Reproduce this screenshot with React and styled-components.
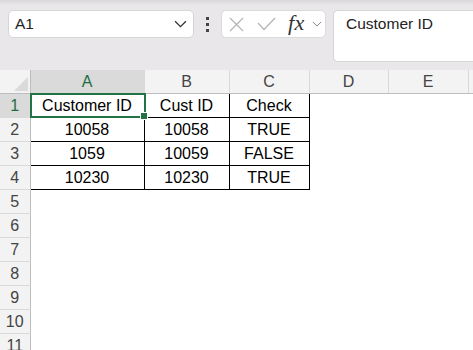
import React from "react";
import styled, { createGlobalStyle } from "styled-components";

const Global = createGlobalStyle`
  html, body { margin: 0; padding: 0; background: #fff; }
  body { font-family: "Liberation Sans", Arial, sans-serif; }
`;

const Page = styled.div`
  width: 473px;
  height: 350px;
  overflow: hidden;
  background: #fff;
`;

const Toolbar = styled.div`
  height: 70px;
  box-sizing: border-box;
  padding: 10px 0 0 8px;
  display: flex;
  align-items: flex-start;
  background: linear-gradient(#d9d7d9 0px, #e9e7e9 5px, #e9e7e9 100%);
`;

const NameBox = styled.div`
  width: 186px;
  height: 28px;
  box-sizing: border-box;
  background: #fff;
  border: 1px solid #d6d4d6;
  border-radius: 5px;
  display: flex;
  align-items: center;
  justify-content: space-between;
  padding: 0 6px 0 6px;
  font-size: 15.5px;
  color: #222;
`;

const Kebab = styled.div`
  width: 27px;
  height: 28px;
  display: flex;
  flex-direction: column;
  align-items: center;
  justify-content: center;
  gap: 3px;
  & > span {
    width: 3px;
    height: 3px;
    background: #444;
  }
`;

const FxButtons = styled.div`
  width: 105px;
  height: 28px;
  box-sizing: border-box;
  background: #fff;
  border: 1px solid #dcdadc;
  border-radius: 5px;
  display: flex;
  align-items: center;
  padding: 0 0 0 7px;
`;

const IconSlot = styled.div`
  width: ${(p) => p.$w}px;
  height: 26px;
  display: flex;
  align-items: center;
  justify-content: ${(p) => p.$justify || "flex-start"};
`;

const FxLabel = styled.span`
  font-family: "Liberation Serif", "Times New Roman", serif;
  font-style: italic;
  font-size: 22px;
  color: #333;
  letter-spacing: 0.5px;
  margin-top: -2px;
`;

const FormulaBar = styled.div`
  margin-left: 7px;
  flex: 1;
  height: 52px;
  box-sizing: border-box;
  background: #fff;
  border: 1px solid #d6d4d6;
  border-right: none;
  border-radius: 5px 0 0 5px;
  padding: 3px 0 0 12px;
  font-size: 15.5px;
  color: #222;
  line-height: 20px;
`;

const Sheet = styled.table`
  border-collapse: collapse;
  table-layout: fixed;
  width: 478px;
  font-size: 16px;
`;

const HeadCell = styled.th`
  height: 23px;
  padding: 0;
  font-weight: normal;
  font-size: 16px;
  background: ${(p) => (p.$sel ? "#dadada" : "#f3f3f3")};
  color: ${(p) => (p.$sel ? "#1e6e42" : "#444")};
  border-right: 1px solid #d9d9d9;
  border-bottom: 1px solid ${(p) => (p.$sel ? "#217346" : "#bdbdbd")};
  text-align: center;
  vertical-align: middle;
  position: relative;
`;

const Corner = styled.th`
  height: 23px;
  padding: 0;
  background: #f3f3f3;
  border-right: 1px solid #bdbdbd;
  border-bottom: 1px solid #bdbdbd;
  position: relative;
  & > svg {
    position: absolute;
    right: 2px;
    bottom: 2px;
  }
`;

const RowHead = styled.td`
  height: 23px;
  padding: 0;
  text-align: center;
  vertical-align: middle;
  font-size: 16px;
  background: ${(p) => (p.$sel ? "#dadada" : "#f3f3f3")};
  color: ${(p) => (p.$sel ? "#1e6e42" : "#444")};
  border-right: 1px solid #bdbdbd;
  border-bottom: 1px solid #d9d9d9;
`;

const Cell = styled.td`
  height: 23px;
  padding: 0;
  text-align: center;
  vertical-align: middle;
  color: #000;
  white-space: nowrap;
  border: ${(p) => (p.$boxed ? "1px solid #000" : "none")};
  position: relative;
`;

const Selection = styled.div`
  position: absolute;
  left: -1px;
  top: -1px;
  right: -2px;
  bottom: -1px;
  border: 2px solid #217346;
  pointer-events: none;
`;

const Handle = styled.div`
  position: absolute;
  right: -4px;
  bottom: -4px;
  width: 6px;
  height: 6px;
  background: #217346;
  border: 1px solid #fff;
`;

const Chevron = ({ size = 12, color = "#444" }) => (
  <svg width={size} height={size * 0.6} viewBox="0 0 12 7" fill="none">
    <polyline points="1,1 6,6 11,1" stroke={color} strokeWidth="1.2" />
  </svg>
);

const cols = ["A", "B", "C", "D", "E", ""];
const widths = [30, 114, 85, 80, 79, 80, 10];
const data = [
  ["Customer ID", "Cust ID", "Check"],
  ["10058", "10058", "TRUE"],
  ["1059", "10059", "FALSE"],
  ["10230", "10230", "TRUE"],
];

export default function App() {
  const rows = Array.from({ length: 11 }, (_, i) => i + 1);
  return (
    <Page>
      <Global />
      <Toolbar>
        <NameBox>
          <span>A1</span>
          <Chevron size={13} color="#333" />
        </NameBox>
        <Kebab>
          <span />
          <span />
          <span />
        </Kebab>
        <FxButtons>
          <IconSlot $w={28}>
            <svg width="15" height="15" viewBox="0 0 15 15">
              <path d="M1 1 L14 14 M14 1 L1 14" stroke="#b4b4b4" strokeWidth="1.2" />
            </svg>
          </IconSlot>
          <IconSlot $w={31}>
            <svg width="19" height="14" viewBox="0 0 19 14">
              <polyline points="1,6 7,12.5 18,1" fill="none" stroke="#b4b4b4" strokeWidth="1.2" />
            </svg>
          </IconSlot>
          <IconSlot $w={24}>
            <FxLabel>fx</FxLabel>
          </IconSlot>
          <IconSlot $w={12}>
            <Chevron size={10} color="#888" />
          </IconSlot>
        </FxButtons>
        <FormulaBar>Customer ID</FormulaBar>
      </Toolbar>
      <Sheet>
        <colgroup>
          {widths.map((w, i) => (
            <col key={i} style={{ width: w }} />
          ))}
        </colgroup>
        <thead>
          <tr>
            <Corner>
              <svg width="14" height="14" viewBox="0 0 14 14">
                <polygon points="14,0 14,14 0,14" fill="#dadada" />
              </svg>
            </Corner>
            {cols.map((c, i) => (
              <HeadCell key={i} $sel={c === "A"}>
                {c}
              </HeadCell>
            ))}
          </tr>
        </thead>
        <tbody>
          {rows.map((r) => (
            <tr key={r}>
              <RowHead $sel={r === 1}>{r}</RowHead>
              {cols.map((c, ci) => {
                const v = data[r - 1] && ci < 3 ? data[r - 1][ci] : "";
                const boxed = r <= 4 && ci < 3;
                return (
                  <Cell key={ci} $boxed={boxed}>
                    {v}
                    {r === 1 && ci === 0 && (
                      <Selection>
                        <Handle />
                      </Selection>
                    )}
                  </Cell>
                );
              })}
            </tr>
          ))}
        </tbody>
      </Sheet>
    </Page>
  );
}
